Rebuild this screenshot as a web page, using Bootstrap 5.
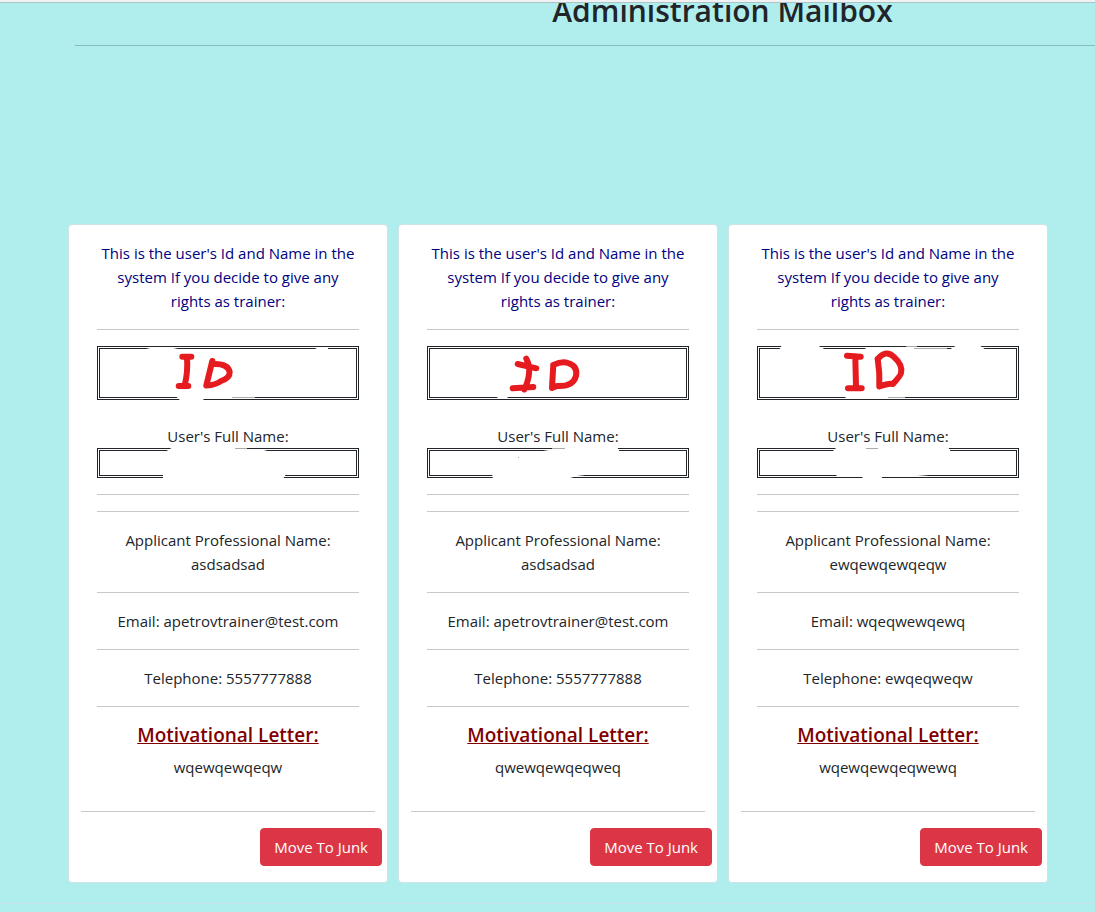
<!DOCTYPE html>
<html lang="en">
<head>
<meta charset="utf-8">
<meta name="viewport" content="width=device-width, initial-scale=1">
<title>Administration Mailbox</title>
<link href="https://cdn.jsdelivr.net/npm/bootstrap@5.3.0/dist/css/bootstrap.min.css" rel="stylesheet">
<style>
body { background: #b0eeee; color: #212529; font-family: "Open Sans", "Noto Sans", sans-serif; font-size: 15px; line-height: 24px; overflow-x: hidden; }
hr { margin: 16px 0; opacity: .25; color: #212529; }
.top-edge { height: 3px; background: #f2f2f5; border-bottom: 1px solid #a9c4c6; }
.page-head { overflow: hidden; padding-left: 75px; height: 221px; }
.page-head-inner { margin: -10px -275px 0 0; }
.page-head h1 { font-size: 30px; line-height: 36px; font-weight: 600; margin: 0; }
.page-head hr { opacity: 1; color: #84bcbf; }
.mail-list { padding-left: 68px; gap: 10px; }
.mail-card { width: 320px; border-color: #cfe3e4; border-radius: 4px; padding: 0 12px 16px; }
.intro { color: #000080; }
.boxed { border: 3px double #212529; min-height: 30px; position: relative; }
.boxed-id { min-height: 54px; margin-bottom: 24px; }
.boxed svg { position: absolute; left: -3px; top: -3px; overflow: visible; }
.erase { fill: #fff; stroke: none; }
.faint { stroke: #aaa; stroke-width: 1; }
.pen { fill: none; stroke: #e61b1f; stroke-width: 6; stroke-linecap: round; stroke-linejoin: round; }
.letter-title { color: #800000; font-size: 19px; line-height: 24px; font-weight: 600; text-decoration: underline; margin: 0 0 8px; }
.btn-junk { font-size: 15px; line-height: 24px; padding: 6px 13px; border-radius: 4px; margin-right: -7px; --bs-btn-bg: #dc3545; }
.page-foot { margin-top: 20px; border-top: 1px solid #c9e5ea; min-height: 8px; }
</style>
</head>
<body>
<div class="top-edge"></div>
<header class="page-head">
  <div class="page-head-inner text-center">
    <h1>Administration Mailbox</h1>
    <hr>
  </div>
</header>
<main class="mail-list d-flex flex-wrap">

  <article class="card mail-card">
    <div class="card-body text-center">
      <p class="intro mb-0">This is the user's Id and Name in the system If you decide to give any rights as trainer:</p>
      <hr>
      <div class="boxed boxed-id">
        <svg width="262" height="54" aria-label="ID">
          <path class="erase" d="M49 2H81L72 4V6H58V4zM218 2H231V4H222zM79 50.5L84 55H104L108 52.5H140L164 50.5z"/>
          <path class="faint" d="M135 51.5H158"/>
          <path class="pen" d="M85.3 10.7H94.3M90 10.7Q91 27 87.7 39M81.7 40H91.300M115.300 15L109.300 39.500Q119 39 124 35Q133 32 132.700 26Q131 17 115.300 18"/>
        </svg>
      </div>
      <div>User's Full Name:</div>
      <div class="boxed">
        <svg width="262" height="30">
          <path class="erase" d="M76 -1H140L150 1.500H165L174 4H68zM66 26H189L186 31H66z"/>
          <path class="faint" d="M138 .5H150"/>
        </svg>
      </div>
      <hr>
      <hr>
      <div>Applicant Professional Name: asdsadsad</div>
      <hr>
      <div>Email: apetrovtrainer@test.com</div>
      <hr>
      <div>Telephone: 5557777888</div>
      <hr>
      <h2 class="letter-title">Motivational Letter:</h2>
      <p class="mb-0">wqewqewqeqw</p>
    </div>
    <hr>
    <button type="button" class="btn btn-danger btn-junk align-self-end">Move To Junk</button>
  </article>

  <article class="card mail-card">
    <div class="card-body text-center">
      <p class="intro mb-0">This is the user's Id and Name in the system If you decide to give any rights as trainer:</p>
      <hr>
      <div class="boxed boxed-id">
        <svg width="262" height="54" aria-label="ID">
          <path class="erase" d="M69 50.500H82L79 52.500H72z"/>
          <path class="pen" d="M90.700 18L109.300 22.300M99.300 12.700Q106 25 97.300 43.500M85.700 42.300L106.300 41M126.300 19L125 42L130 40Q146 41 149 30Q151 20 141 17Q135 15 126.300 19"/>
        </svg>
      </div>
      <div>User's Full Name:</div>
      <div class="boxed">
        <svg width="262" height="30">
          <path class="erase" d="M136 -1H190L193 4H110L122 2H136zM65 26H166L150 28L140 31H66z"/>
          <path class="faint" d="M125 .5H138M91 9.500H92"/>
        </svg>
      </div>
      <hr>
      <hr>
      <div>Applicant Professional Name: asdsadsad</div>
      <hr>
      <div>Email: apetrovtrainer@test.com</div>
      <hr>
      <div>Telephone: 5557777888</div>
      <hr>
      <h2 class="letter-title">Motivational Letter:</h2>
      <p class="mb-0">qwewqewqeqweq</p>
    </div>
    <hr>
    <button type="button" class="btn btn-danger btn-junk align-self-end">Move To Junk</button>
  </article>

  <article class="card mail-card">
    <div class="card-body text-center">
      <p class="intro mb-0">This is the user's Id and Name in the system If you decide to give any rights as trainer:</p>
      <hr>
      <div class="boxed boxed-id">
        <svg width="262" height="54" aria-label="ID">
          <path class="erase" d="M25 -1H60L69 4H22zM110 1.500H148L152 -1H160V4H106zM200 -1H222L229 4H192zM88 50.500H151L140 52.500H89z"/>
          <path class="faint" d="M150 .5H160M157 2.500H190M131 51.500H148"/>
          <path class="pen" d="M90 9.700L103.700 10.700M98.300 11L99 40M91 42.300H104.700M120.700 13Q123 27 122.300 40.500Q132 37 136 38Q144 29 144 27Q146 19 137 11Q129 3 120.700 13"/>
        </svg>
      </div>
      <div>User's Full Name:</div>
      <div class="boxed">
        <svg width="262" height="30">
          <path class="erase" d="M80 -1H191L194 4H75zM78 26H184L160 28H126L124 31H107L104 28H80z"/>
          <path class="faint" d="M109 .5H121"/>
        </svg>
      </div>
      <hr>
      <hr>
      <div>Applicant Professional Name: ewqewqewqeqw</div>
      <hr>
      <div>Email: wqeqwewqewq</div>
      <hr>
      <div>Telephone: ewqeqweqw</div>
      <hr>
      <h2 class="letter-title">Motivational Letter:</h2>
      <p class="mb-0">wqewqewqeqwewq</p>
    </div>
    <hr>
    <button type="button" class="btn btn-danger btn-junk align-self-end">Move To Junk</button>
  </article>

</main>
<footer class="page-foot"></footer>
<script src="https://cdn.jsdelivr.net/npm/bootstrap@5.3.0/dist/js/bootstrap.bundle.min.js"></script>
</body>
</html>
